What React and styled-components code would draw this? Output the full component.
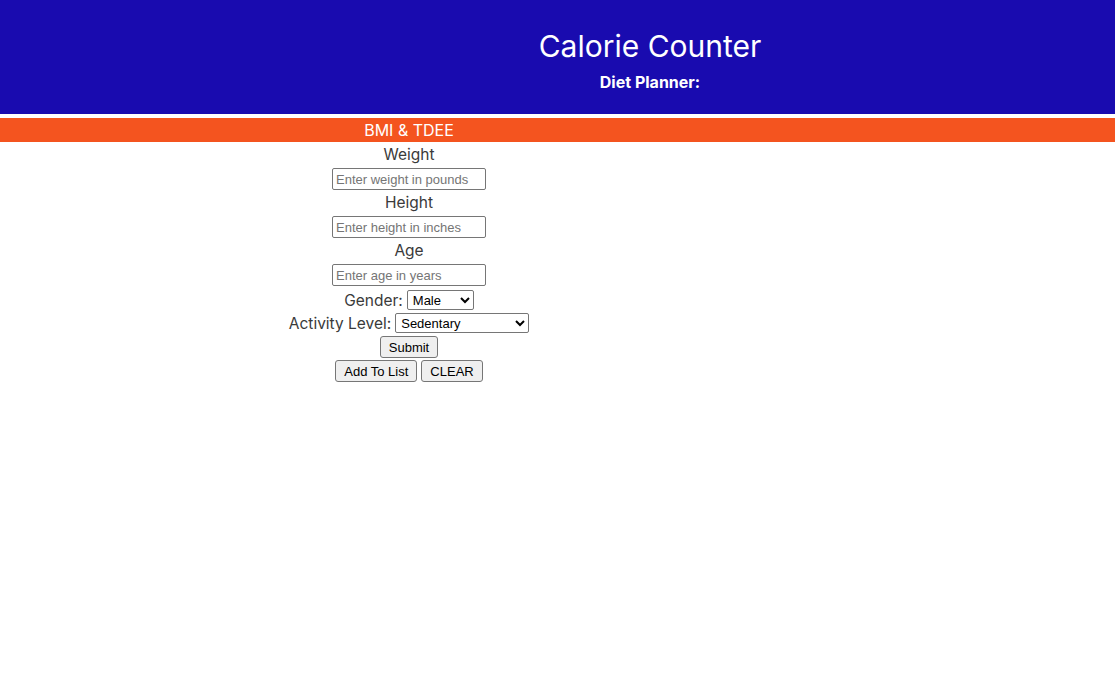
import React, { useState } from "react";
import styled, { createGlobalStyle } from "styled-components";

const GlobalStyle = createGlobalStyle`
  body {
    margin: 0;
    background: #ffffff;
    font-family: Inter, "Liberation Sans", sans-serif;
  }
`;

const App = () => {
  const [gender, setGender] = useState("male");
  const [activity, setActivity] = useState("sedentary");
  return (
    <>
      <GlobalStyle />
      <Header>
        <Title>Calorie Counter</Title>
        <SubTitle>Diet Planner:</SubTitle>
      </Header>
      <SectionBar>
        <SectionTitle>BMI &amp; TDEE</SectionTitle>
      </SectionBar>
      <Column>
        <Form onSubmit={(e) => e.preventDefault()}>
          <Label>Weight</Label>
          <TextInput placeholder="Enter weight in pounds" />
          <Label>Height</Label>
          <TextInput placeholder="Enter height in inches" />
          <Label>Age</Label>
          <TextInput placeholder="Enter age in years" />
          <Row $offset={3}>
            Gender:
            <Select
              $width={67}
              value={gender}
              onChange={(e) => setGender(e.target.value)}
            >
              <option value="male">Male</option>
              <option value="female">Female</option>
            </Select>
          </Row>
          <Row $offset={1}>
            Activity Level:
            <Select
              $width={134}
              value={activity}
              onChange={(e) => setActivity(e.target.value)}
            >
              <option value="sedentary">Sedentary</option>
              <option value="light">Lightly Active</option>
              <option value="moderate">Moderately Active</option>
              <option value="very">Very Active</option>
            </Select>
          </Row>
          <ButtonRow>
            <Button type="submit">Submit</Button>
          </ButtonRow>
          <ButtonRow>
            <Button type="button">Add To List</Button>
            <Button type="button">CLEAR</Button>
          </ButtonRow>
        </Form>
      </Column>
    </>
  );
};

const Header = styled.header`
  display: flex;
  flex-direction: column;
  align-items: center;
  height: 114px;
  padding-left: 185px;
  box-sizing: border-box;
  background-color: #190baf;
  color: #ffffff;
`;
const Title = styled.h1`
  margin: 28px 0 0;
  font-size: 30px;
  font-weight: 400;
  line-height: 36px;
`;
const SubTitle = styled.h4`
  margin: 8px 0 0;
  font-size: 16px;
  font-weight: 700;
  line-height: 20px;
`;
const SectionBar = styled.div`
  margin-top: 4px;
  height: 24px;
  background-color: #f4541f;
  color: #ffffff;
`;
const SectionTitle = styled.div`
  width: 818px;
  line-height: 24px;
  text-align: center;
  font-size: 16px;
`;
const Column = styled.div`
  width: 818px;
`;
const Form = styled.form`
  display: flex;
  flex-direction: column;
  align-items: center;
  color: #3a3a3a;
  font-size: 15.5px;
`;
const Label = styled.label`
  display: block;
  padding-top: 1px;
  line-height: 23px;
`;
const TextInput = styled.input`
  width: 154px;
  height: 22px;
  margin-top: 2px;
  box-sizing: border-box;
  padding: 1px 3px;
  border: 1px solid #767676;
  border-radius: 2px;
  font-family: "Liberation Sans", Arial, sans-serif;
  font-size: 13px;
  &::placeholder {
    color: #757575;
  }
`;
const Row = styled.div`
  display: flex;
  align-items: center;
  gap: 4px;
  height: 22px;
  padding-top: ${({ $offset }) => $offset}px;
`;
const Select = styled.select`
  width: ${({ $width }) => $width}px;
  height: 20px;
  box-sizing: border-box;
  padding: 0 1px;
  border: 1px solid #767676;
  border-radius: 2px;
  background: #ffffff;
  color: #000000;
  font-family: "Liberation Sans", Arial, sans-serif;
  font-size: 13px;
`;
const ButtonRow = styled.div`
  display: flex;
  gap: 4px;
  margin-top: 2px;
`;
const Button = styled.button`
  height: 22px;
  padding: 1px 8px;
  box-sizing: border-box;
  border: 1px solid #767676;
  border-radius: 3px;
  background-color: #efefef;
  color: #000000;
  font-family: "Liberation Sans", Arial, sans-serif;
  font-size: 13px;
`;

export default App;
